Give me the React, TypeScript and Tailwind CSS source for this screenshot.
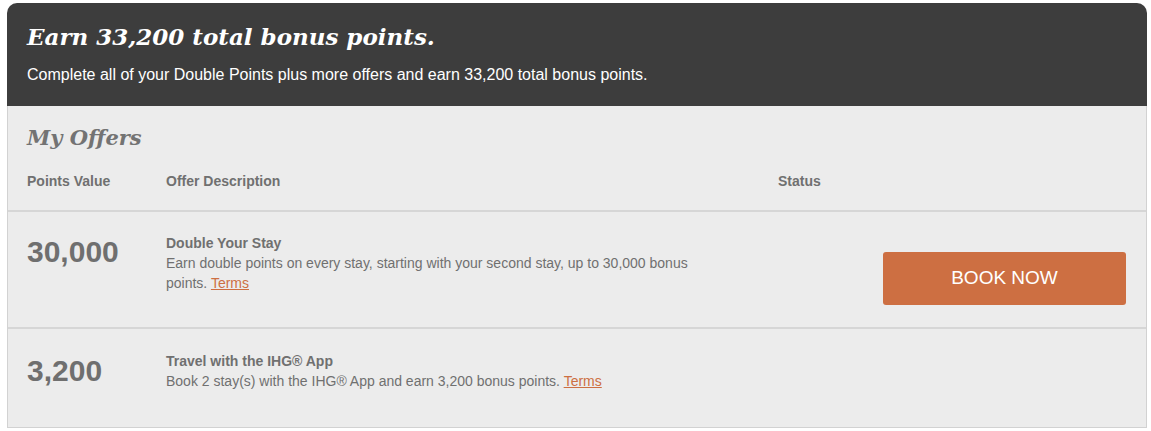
export default function App() {
  const sans = { fontFamily: '"Liberation Sans", Arial, sans-serif' };
  const serif = { fontFamily: '"DejaVu Serif", Georgia, serif' };
  return (
    <div className="w-[1151px] h-[431px] bg-white pt-[3px] pl-[7px]" style={sans}>
      <div className="w-[1140px]">
        <div className="bg-[#3d3d3d] rounded-t-[10px] px-[20px] pt-[19px] pb-[21px] text-white">
          <h1 className="text-[23px] leading-[30px] font-bold italic" style={serif}>
            Earn 33,200 total bonus points.
          </h1>
          <p className="mt-[13px] text-[16px] leading-[20px]">
            Complete all of your Double Points plus more offers and earn 33,200 total bonus points.
          </p>
        </div>
        <div className="bg-[#ececec] border-x border-b border-[#d2d2d2] text-[#707070]">
          <div className="pl-[19px] pr-[20px] pt-[18px] pb-[19px] border-b-2 border-[#d6d6d6]">
            <h2 className="text-[21px] leading-[28px] font-bold italic text-[#737373]" style={serif}>
              My Offers
            </h2>
            <div className="mt-[19px] flex text-[14px] leading-[20px] font-bold">
              <div className="w-[139px]">Points Value</div>
              <div className="w-[612px]">Offer Description</div>
              <div>Status</div>
            </div>
          </div>
          <div className="h-[117px] flex pl-[19px] pr-[20px] pt-[20px] border-b-2 border-[#d6d6d6]">
            <div className="w-[139px] text-[30px] leading-[36px] font-bold text-[#6f6f6f] mt-[2px]">30,000</div>
            <div className="w-[530px] text-[14px] leading-[20px] pt-[1px]">
              <div className="font-bold">Double Your Stay</div>
              <p>
                Earn double points on every stay, starting with your second stay, up to 30,000 bonus points.{" "}
                <a href="#" className="text-[#cd6f42] underline">Terms</a>
              </p>
            </div>
            <div className="flex-1 flex justify-end pt-[20px]">
              <button className="w-[243px] h-[53px] rounded-[3px] bg-[#cd6f42] text-white text-[19px]">BOOK NOW</button>
            </div>
          </div>
          <div className="h-[98px] flex pl-[19px] pr-[20px] pt-[20px]">
            <div className="w-[139px] text-[30px] leading-[36px] font-bold text-[#6f6f6f] mt-[4px]">3,200</div>
            <div className="text-[14px] leading-[20px] mt-[2px]">
              <div className="font-bold">Travel with the IHG® App</div>
              <p>
                Book 2 stay(s) with the IHG® App and earn 3,200 bonus points.{" "}
                <a href="#" className="text-[#cd6f42] underline">Terms</a>
              </p>
            </div>
          </div>
        </div>
      </div>
    </div>
  );
}
